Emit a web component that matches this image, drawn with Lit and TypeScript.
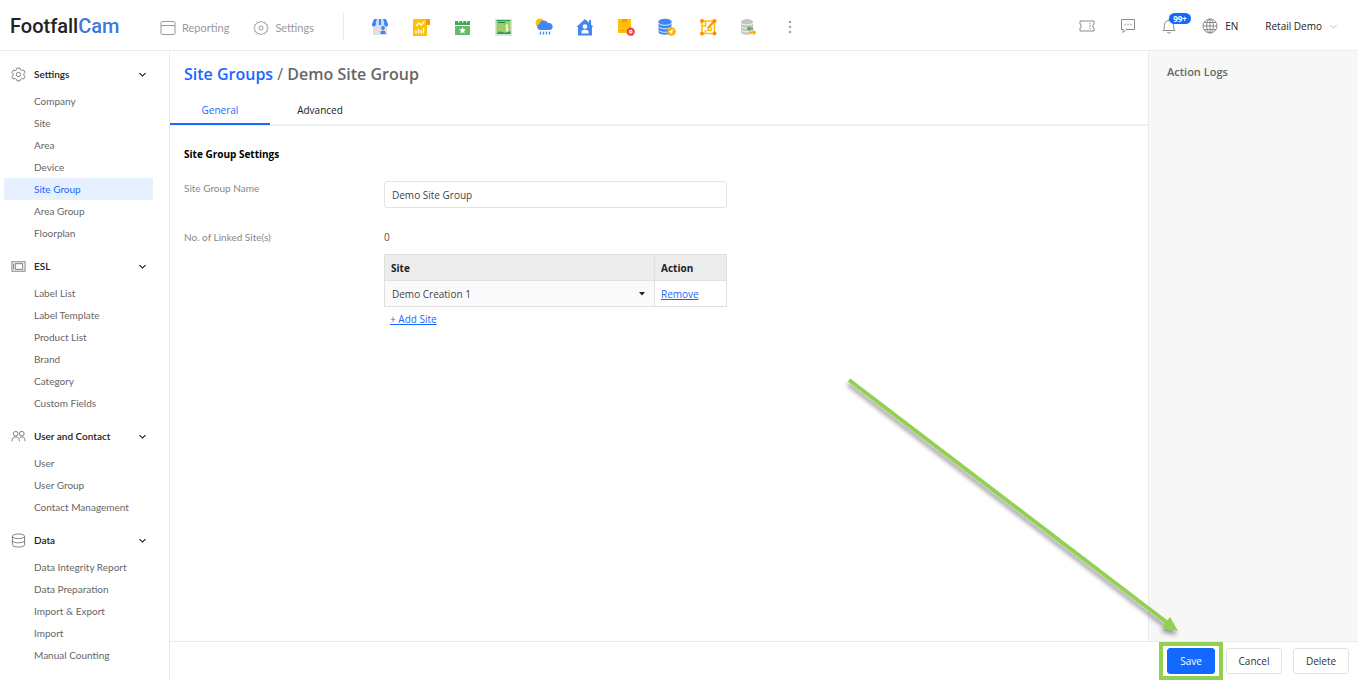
import { LitElement, html, svg, css } from "lit";
import { customElement, state } from "lit/decorators.js";
import { classMap } from "lit/directives/class-map.js";

interface Section {
  title: string;
  icon: unknown;
  items: string[];
}

const line = (body: unknown, size = 16) =>
  html`<svg class="line" width=${size} height=${size} viewBox="0 0 16 16" aria-hidden="true">${body}</svg>`;

const gear = svg`<path d="M6.4 1.2h3.2l.6 1.8 1.3.7 1.9-.5 1.6 2.7-1.3 1.4v1.4l1.3 1.4-1.6 2.7-1.9-.5-1.3.7-.6 1.8H6.400L5.800 13l-1.300-.7-1.900.5L1 10.100l1.300-1.400V7.300L1 5.900l1.600-2.700 1.900.5 1.300-.7z"/><circle cx="8" cy="8" r="2.300"/>`;
const cog = svg`<path d="M8 1 9.500 2.600 11.600 2 12.400 3.900 14.200 4.500 14 6.600 15.200 8 14 9.500 14.200 11.600 12.400 12.200 11.600 14 9.500 13.500 8 15 6.500 13.500 4.400 14 3.600 12.200 1.800 11.600 2 9.500.8 8 2 6.600 1.800 4.500 3.600 3.900 4.400 2 6.500 2.600z"/><circle cx="8" cy="8" r="2"/>`;
const windowIcon = svg`<rect x="1" y="1.500" width="14" height="13" rx="1.500"/><path d="M1 5.500h14"/>`;
const tag = svg`<rect x="1" y="3" width="14" height="10"/><rect x="4.500" y="5" width="8" height="6"/><path d="M2.800 5v6"/>`;
const people = svg`<circle cx="5" cy="5" r="2.500"/><circle cx="11.500" cy="5" r="2.500"/><path d="M1 13c0-3 1.500-4.500 4-4.500S9 10 9 13M9.500 9c3.500-1.300 5.500 0 5.500 4"/>`;
const database = svg`<ellipse cx="8" cy="3.500" rx="6.500" ry="2.500"/><path d="M1.500 3.500v9c0 3.300 13 3.300 13 0v-9M1.500 8c0 3.300 13 3.300 13 0"/>`;
const ticket = svg`<path d="M1 3h14v3.200a1.900 1.900 0 0 0 0 3.600V13H1V9.800a1.900 1.900 0 0 0 0-3.600z"/><path d="M11 5v1.500M11 7.300v1.500M11 9.800v1.500"/>`;
const chat = svg`<path d="M1.500 1.500h13v10H6l-2.800 3v-3H1.500z"/><path d="M4.500 6.500h1M7.500 6.500h1M10.500 6.500h1" stroke-width="1.500"/>`;
const bell = svg`<path d="M2 12.500c1.400-1.300 1.400-3 1.400-5 0-3 1.800-5 4.600-5s4.600 2 4.600 5c0 2 0 3.700 1.400 5zM6.300 14c.5 1.500 2.900 1.500 3.400 0M8 1v1.500"/>`;
const globe = svg`<circle cx="8" cy="8" r="7"/><ellipse cx="8" cy="8" rx="3.300" ry="7"/><path d="M8 1v14M1 8h14M2 4.500h12M2 11.500h12"/>`;
const chevron = svg`<path d="m2.500 5.500 5.500 5 5.500-5"/>`;

const launchers: { label: string; art: unknown }[] = [
  {
    label: "Store",
    art: svg`<path fill="#e0e0e0" d="M2 6h14v11H2z"/><path fill="#4285f4" d="M3 1h3L4.800 6.500a2 2 0 0 1-4 0zM8 1h2v6H7zM12 1h3l2.200 5.500a2 2 0 0 1-4 0z"/><path fill="#c5dafc" d="M6 1h2v6H5zM10 1h2l1 6h-3z"/><circle cx="12" cy="10" r="1.900" fill="#4285f4"/><path fill="#4285f4" d="M9.500 16v-2.500l2.500-1 2.500 1V16z"/>`,
  },
  {
    label: "Reports",
    art: svg`<path fill="#ffc107" d="M1 1h14v17H1z"/><path fill="#ff9800" d="M14 1h4v6h-4z"/><g fill="none" stroke="#fff" stroke-width="1.300"><path d="m4 8 3-3 2 2 3.500-3.500M4 15.500v-3M6.500 15.500V11M9 15.500v-3.500M11.500 15.500V10"/></g>`,
  },
  {
    label: "Events",
    art: svg`<path fill="#66bb6a" d="M2 8h15v9H2z"/><path fill="#43a55b" d="M2 3h15v4H2z"/><path fill="#fff" d="M5 1.500h1.500v3H5zM9 1.500h1.300v3H9zM13 1.500h1.300v3H13z"/><path fill="#fff" d="m9.500 9 1 2.300 2.500.2-1.900 1.600.6 2.400-2.200-1.300-2.200 1.300.6-2.400L6 11.500l2.500-.2z"/>`,
  },
  {
    label: "Sales",
    art: svg`<path fill="#e0e0e0" d="M1 1h17v17H1z"/><path fill="#9ccc65" d="M2.500 2h14v14h-14z"/><path fill="#1e9e57" d="M2.500 2h14v1h-14zM2.500 16c2-3 4-3 6-2s5 1 8-1v3z"/><path d="M4 4.500h7" stroke="#237a49"/><path d="M14.500 8c-3-1.500-4 1-1.700 1.800 2.500.8 1.500 3.500-1.300 2.200M13 6v8" fill="none" stroke="#fff"/>`,
  },
  {
    label: "Weather",
    art: svg`<circle cx="5" cy="5" r="4.500" fill="#ffc107"/><path fill="#4285f4" d="M5 12a3 3 0 0 1-.5-5.900 4.500 4.500 0 0 1 8.500-1 3.500 3.500 0 0 1 2 6.900z"/><path d="m6 13.500-1 3M9 13.500l-1 3M12 13.500l-1 3M15 13.500l-1 3" stroke="#4285f4" stroke-width="1.200"/>`,
  },
  {
    label: "Home",
    art: svg`<path fill="#4285f4" d="m9 1 8.500 8H16v8.500H2V9H.5L5 4.800z"/><path fill="#4285f4" d="M13 2h2v5h-2z"/><circle cx="9" cy="8.500" r="2.300" fill="#fff"/><path fill="#fff" d="M5.500 15.500v-2c0-2.500 7-2.500 7 0v2z"/>`,
  },
  {
    label: "Inventory",
    art: svg`<path fill="#ffc107" d="M1 1h13v14H1z"/><path fill="#ff9800" d="M5 1h5v4L7.500 3.500 5 5zM3 12h4v1H3z"/><circle cx="13.700" cy="13.700" r="3" fill="#fff" stroke="#ef4444" stroke-width="2.300"/><circle cx="13.700" cy="13.700" r=".6" fill="#ef4444"/>`,
  },
  {
    label: "Data source",
    art: svg`<g fill="#4285f4"><ellipse cx="7" cy="3.500" rx="6.500" ry="2.800"/><path d="M.5 3.500v10.500c0 3.500 13 3.500 13 0V3.500z"/></g><g fill="none" stroke="#fff" stroke-width=".8"><path d="M.5 5c1 3 12 3 13 0M.5 8.500c1 3 12 3 13 0M.5 12c1 3 12 3 13 0"/></g><circle cx="13.500" cy="13.500" r="4.300" fill="#ffb300"/><path fill="#fff" d="m11 13.700 4-2.700-1 5z"/>`,
  },
  {
    label: "Layout",
    art: svg`<g fill="none" stroke="#ffc107" stroke-width="1.600"><path d="M3 3h12.500v12.500H3zM6.500 3v5h-3M6.500 15.500V12M9 9v3.500h3V9"/></g><g fill="#ff8f00"><circle cx="3" cy="3" r="2"/><circle cx="3" cy="15.500" r="2"/><circle cx="15.500" cy="15.500" r="2"/><circle cx="15.500" cy="3" r="2"/></g><path d="m9 10 6-6.500" stroke="#ff8f00" stroke-width="2"/>`,
  },
  {
    label: "Data export",
    art: svg`<g fill="#c4c4c4"><ellipse cx="7" cy="4" rx="6" ry="3"/><path d="M1 4v10c0 3.500 12 3.500 12 0V4z"/></g><g fill="none" stroke="#f5f5f5"><path d="M1 5c1 2.500 11 2.500 12 0M1 8.500c1 2.500 11 2.500 12 0M1 12c1 2.500 11 2.500 12 0"/></g><path fill="#4caf50" d="m6.500 10.500 3.500-2.700v1.700h3v2h-3v1.700z"/><path fill="#ffb300" d="m16.500 14.500-3.500-3v2H9v2h4v2z"/>`,
  },
];

const sections: Section[] = [
  {
    title: "Settings",
    icon: gear,
    items: ["Company", "Site", "Area", "Device", "Site Group", "Area Group", "Floorplan"],
  },
  {
    title: "ESL",
    icon: tag,
    items: ["Label List", "Label Template", "Product List", "Brand", "Category", "Custom Fields"],
  },
  {
    title: "User and Contact",
    icon: people,
    items: ["User", "User Group", "Contact Management"],
  },
  {
    title: "Data",
    icon: database,
    items: ["Data Integrity Report", "Data Preparation", "Import & Export", "Import", "Manual Counting"],
  },
];

const shared = css`
  :host {
    box-sizing: border-box;
    font-family: "Open Sans", "Noto Sans", sans-serif;
    font-size: 10px;
    line-height: 22px;
    color: #4f4f4f;
  }
  * {
    box-sizing: border-box;
  }
  button,
  input,
  select {
    font: inherit;
    color: inherit;
    margin: 0;
  }
  button {
    border: 0;
    padding: 0;
    background: none;
    cursor: pointer;
  }
  a {
    color: #1668ff;
  }
  svg {
    display: block;
    flex: none;
  }
  .line {
    fill: none;
    stroke: currentColor;
    stroke-width: 1;
  }
`;

@customElement("top-bar")
class TopBar extends LitElement {
  static styles = [
    shared,
    css`
      :host {
        display: flex;
        align-items: center;
        height: 51px;
        padding: 2px 20px 0 10px;
        border-bottom: 1px solid #ebebeb;
        background: #fff;
      }
      .logo {
        width: 150px;
        font-family: Roboto, sans-serif;
        font-size: 20px;
        font-weight: 500;
        color: #222;
        text-decoration: none;
      }
      .logo span {
        color: #3b78d8;
      }
      .modes {
        display: flex;
        gap: 24px;
        width: 183px;
        padding-top: 4px;
      }
      .mode {
        display: flex;
        align-items: center;
        gap: 6px;
        color: #999;
        font-family: Lato, sans-serif;
        font-size: 11px;
        text-decoration: none;
      }
      .apps {
        display: flex;
        align-items: center;
        gap: 23px;
        height: 28px;
        margin-top: 2px;
        padding-left: 27px;
        border-left: 1px solid #ebebeb;
      }
      .more {
        width: 18px;
        display: grid;
        place-items: center;
      }
      .tools {
        display: flex;
        align-items: center;
        margin-left: auto;
        color: #8a8a8a;
      }
      .tool {
        position: relative;
        width: 16px;
        margin-right: 25px;
      }
      .badge {
        position: absolute;
        left: 8px;
        top: -5px;
        padding: 0 4px;
        border-radius: 6px;
        background: #1268ff;
        color: #fff;
        font-size: 8px;
        font-weight: 700;
        line-height: 11px;
      }
      .menu {
        display: flex;
        align-items: center;
        gap: 7px;
        color: #222;
        font-size: 10px;
      }
      .menu svg {
        color: #8a8a8a;
      }
      .account {
        margin-left: 27px;
      }
    `,
  ];

  render() {
    return html`
      <a class="logo" href="#">Footfall<span>Cam</span></a>
      <nav class="modes">
        <a class="mode" href="#">${line(windowIcon)}Reporting</a>
        <a class="mode" href="#">${line(cog)}Settings</a>
      </nav>
      <div class="apps">
        ${launchers.map(
          (l) => html`<button aria-label=${l.label}>
            <svg width="18" height="18" viewBox="0 0 18 18" aria-hidden="true">${l.art}</svg>
          </button>`,
        )}
        <button class="more" aria-label="More">
          <svg width="4" height="14" viewBox="0 0 4 14" fill="#a6a6a6" aria-hidden="true">
            <circle cx="2" cy="2" r="1.300" /><circle cx="2" cy="7" r="1.300" /><circle cx="2" cy="12" r="1.300" />
          </svg>
        </button>
      </div>
      <div class="tools">
        <button class="tool" aria-label="Tickets">${line(ticket)}</button>
        <button class="tool" aria-label="Messages">${line(chat)}</button>
        <button class="tool" aria-label="Notifications">${line(bell)}<span class="badge">99+</span></button>
        <button class="menu">${line(globe)}EN</button>
        <button class="menu account">Retail Demo ${line(chevron, 9)}</button>
      </div>
    `;
  }
}

@customElement("side-menu")
class SideMenu extends LitElement {
  @state() private current = "Site Group";

  static styles = [
    shared,
    css`
      :host {
        display: flex;
        flex-direction: column;
        gap: 11px;
        width: 170px;
        padding: 12px 16px 0 4px;
        border-right: 1px solid #ebebeb;
        font-family: Lato, sans-serif;
      }
      .head {
        display: flex;
        align-items: center;
        width: 100%;
        padding: 0 6px 0 7px;
        font-weight: 600;
        color: #222;
      }
      .head .line:last-child {
        stroke-width: 2;
      }
      .title {
        flex: 1;
        padding-left: 8px;
        text-align: left;
      }
      .head .line:first-child {
        color: #777;
      }
      .list {
        list-style: none;
        margin: 5px 0 0;
        padding: 0;
      }
      .item {
        display: block;
        padding-left: 30px;
        color: #666;
        text-decoration: none;
      }
      .on {
        background: #e6f0ff;
        color: #1668ff;
      }
    `,
  ];

  render() {
    return sections.map(
      (s) => html`<section>
        <button class="head">${line(s.icon, 15)}<span class="title">${s.title}</span>${line(chevron, 9)}</button>
        <ul class="list">
          ${s.items.map(
            (name) => html`<li>
              <a
                class=${classMap({ item: true, on: name === this.current })}
                href="#"
                @click=${() => (this.current = name)}
                >${name}</a
              >
            </li>`,
          )}
        </ul>
      </section>`,
    );
  }
}

@customElement("group-form")
class GroupForm extends LitElement {
  static styles = [
    shared,
    css`
      :host {
        display: block;
      }
      .title {
        margin: 0;
        padding: 12px 14px 0;
        font-size: 16px;
        font-weight: 600;
        color: #666;
      }
      .title a {
        text-decoration: none;
      }
      .title span {
        font-weight: 400;
      }
      .tabs {
        display: flex;
        height: 41px;
        padding-top: 9px;
        border-bottom: 2px solid #efefef;
      }
      .tab {
        width: 100px;
        height: 31px;
        padding-top: 2px;
        font-size: 10px;
        color: #222;
        border-bottom: 2px solid transparent;
      }
      .active {
        color: #1668ff;
        border-bottom-color: #1668ff;
      }
      .body {
        display: grid;
        grid-template-columns: 200px 343px;
        padding: 17px 14px;
      }
      .subtitle {
        grid-column: 1 / -1;
        margin: 0 0 16px;
        font-size: 10px;
        font-weight: 700;
        color: #000;
      }
      .label {
        color: #888;
        font-family: Lato, sans-serif;
        line-height: 14px;
      }
      .text {
        width: 100%;
        height: 27px;
        margin-bottom: 22px;
        padding: 0 7px;
        border: 1px solid #e3e3e3;
        border-radius: 3px;
        background: #fff;
        color: #444;
      }
      .count {
        line-height: 14px;
        margin-bottom: 10px;
      }
      .sites {
        width: 100%;
        border-collapse: collapse;
        table-layout: fixed;
      }
      .sites th,
      .sites td {
        height: 26px;
        padding: 0 6px;
        border: 1px solid #e0e0e0;
        text-align: left;
      }
      .sites th {
        background: #ededed;
        color: #222;
        font-weight: 700;
      }
      .sites .action {
        width: 72px;
      }
      .sites .pick {
        padding: 0;
        background: #fafafa;
      }
      .wrap {
        display: grid;
        align-items: center;
      }
      .wrap > * {
        grid-area: 1 / 1;
      }
      .select {
        appearance: none;
        width: 100%;
        height: 24px;
        padding: 0 7px;
        border: 0;
        background: none;
        color: #444;
      }
      .caret {
        justify-self: end;
        margin-right: 9px;
        pointer-events: none;
      }
      .add {
        display: inline-block;
        margin: 1px 0 0 6px;
      }
    `,
  ];

  render() {
    return html`
      <h1 class="title"><a href="#">Site Groups</a> <span>/</span> Demo Site Group</h1>
      <div class="tabs" role="tablist">
        <button class="tab active" role="tab" aria-selected="true">General</button>
        <button class="tab" role="tab" aria-selected="false">Advanced</button>
      </div>
      <form class="body">
        <h2 class="subtitle">Site Group Settings</h2>
        <label class="label" for="name">Site Group Name</label>
        <input class="text" id="name" type="text" value="Demo Site Group" />
        <span class="label">No. of Linked Site(s)</span>
        <div>
          <div class="count">0</div>
          <table class="sites">
            <thead>
              <tr>
                <th>Site</th>
                <th class="action">Action</th>
              </tr>
            </thead>
            <tbody>
              <tr>
                <td class="pick">
                  <div class="wrap">
                    <select class="select" aria-label="Site">
                      <option>Demo Creation 1</option>
                    </select>
                    <svg class="caret" width="6" height="4" viewBox="0 0 6 4" aria-hidden="true">
                      <path d="M0 0h6L3 3.500z" fill="#222" />
                    </svg>
                  </div>
                </td>
                <td><a href="#">Remove</a></td>
              </tr>
            </tbody>
          </table>
          <a class="add" href="#">+ Add Site</a>
        </div>
      </form>
    `;
  }
}

@customElement("app-root")
class AppRoot extends LitElement {
  static styles = [
    shared,
    css`
      :host {
        display: flex;
        flex-direction: column;
        min-height: 100vh;
        background: #fff;
        overflow: hidden;
      }
      .page {
        flex: 1;
        display: flex;
      }
      .content {
        flex: 1;
        display: flex;
        flex-direction: column;
      }
      .upper {
        flex: 1;
        display: flex;
      }
      group-form {
        flex: 1;
      }
      .logs {
        width: 210px;
        padding: 10px 18px;
        border-left: 1px solid #ebebeb;
        background: #f7f7f7;
      }
      .logs-title {
        margin: 0;
        font-size: 11px;
        font-weight: 600;
        color: #666;
      }
      .footer {
        display: flex;
        justify-content: flex-end;
        align-items: center;
        height: 40px;
        padding: 0 9px 2px 0;
        border-top: 1px solid #ebebeb;
      }
      .spot {
        position: relative;
        margin-right: 3px;
        padding: 2px 4px;
        border: 4px solid #92d050;
      }
      .arrow {
        position: absolute;
        right: 31px;
        bottom: 37px;
        pointer-events: none;
      }
      .btn {
        display: block;
        width: 56px;
        height: 26px;
        border: 1px solid #e3e3e3;
        border-radius: 3px;
        background: #fff;
        color: #333;
        line-height: 22px;
      }
      .primary {
        width: 48px;
        border-color: #1268ff;
        background: #1268ff;
        color: #fff;
      }
      .delete {
        margin-left: 11px;
      }
    `,
  ];

  render() {
    return html`
      <top-bar></top-bar>
      <div class="page">
        <side-menu></side-menu>
        <div class="content">
          <div class="upper">
            <group-form></group-form>
            <aside class="logs"><h2 class="logs-title">Action Logs</h2></aside>
          </div>
          <footer class="footer">
            <div class="spot">
              <button class="btn primary">Save</button>
              <svg class="arrow" width="350" height="270" viewBox="0 0 350 270" aria-hidden="true">
                <defs>
                  <filter id="soft" x="-10%" y="-10%" width="120%" height="120%">
                    <feDropShadow dx="-1" dy="4" stdDeviation="2" flood-color="#000" flood-opacity=".4" />
                  </filter>
                </defs>
                <g filter="url(#soft)">
                  <path d="m11 11 320 244" stroke="#92d050" stroke-width="4" />
                  <path d="m340 262-16-3 8-11z" fill="#92d050" />
                </g>
              </svg>
            </div>
            <button class="btn">Cancel</button>
            <button class="btn delete">Delete</button>
          </footer>
        </div>
      </div>
    `;
  }
}
